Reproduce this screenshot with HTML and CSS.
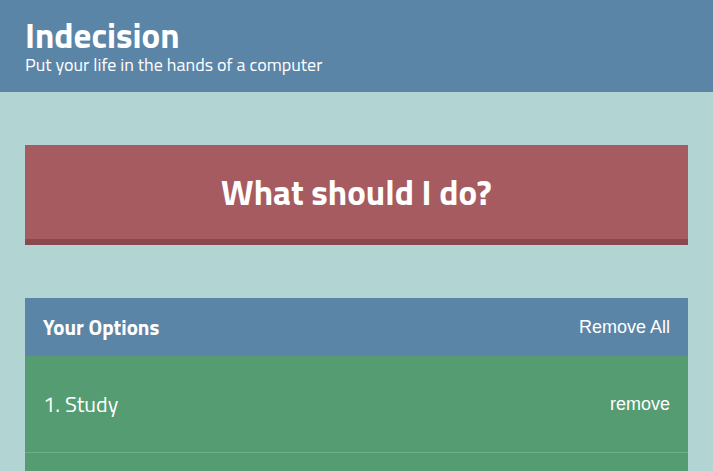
FILE: index.html
```html
<!DOCTYPE html>
<html lang="en">
<head>
<meta charset="utf-8">
<meta name="viewport" content="width=device-width, initial-scale=1">
<title>Indecision</title>
<link rel="stylesheet" href="styles.css">
</head>
<body>
<header class="header">
  <h1 class="header__title">Indecision</h1>
  <p class="header__subtitle">Put your life in the hands of a computer</p>
</header>
<main class="container">
  <button class="big-button" type="button">What should I do?</button>
  <section class="widget">
    <div class="widget__header">
      <h2 class="widget__title">Your Options</h2>
      <button class="link-button" type="button">Remove All</button>
    </div>
    <div class="option">
      <p class="option__text">1. Study</p>
      <button class="link-button" type="button">remove</button>
    </div>
  </section>
</main>
</body>
</html>
```

FILE: styles.css
```css
* {
  box-sizing: border-box;
}

body {
  display: flex;
  flex-direction: column;
  min-height: 100vh;
  margin: 0;
  background: #b2d4d2;
  color: #fff;
  font-family: "Titillium Web", "Open Sans", sans-serif;
}

h1,
h2,
p {
  margin: 0;
}

.header {
  padding: 18px 25px 16px;
  background: #5b85a7;
}

.header__title {
  font-size: 35px;
  line-height: 35px;
}

.header__subtitle {
  font-size: 18px;
  line-height: 23px;
}

.container {
  display: flex;
  flex: 1;
  flex-direction: column;
  padding: 53px 25px 0;
}

.big-button {
  width: 100%;
  margin-bottom: 53px;
  padding: 20px 0;
  border: 0;
  border-bottom: 6px solid #8a484f;
  background: #a65b60;
  color: #fff;
  font: bold 35px/54px "Titillium Web", "Open Sans", sans-serif;
}

.widget {
  flex: 1;
  background: #559c73;
}

.widget__header,
.option {
  display: flex;
  align-items: center;
  justify-content: space-between;
}

.widget__header {
  padding: 12px 18px;
  background: #5b85a7;
}

.widget__title,
.option__text {
  line-height: 34px;
}

.widget__title {
  font-size: 21px;
}

.link-button {
  padding: 0;
  border: 0;
  background: none;
  color: #fff;
  font: 18px "Liberation Sans", Arial, sans-serif;
}

.option {
  padding: 31px 18px;
  border-bottom: 1px solid #6fb08b;
}

.option__text {
  font-size: 22px;
}
```
